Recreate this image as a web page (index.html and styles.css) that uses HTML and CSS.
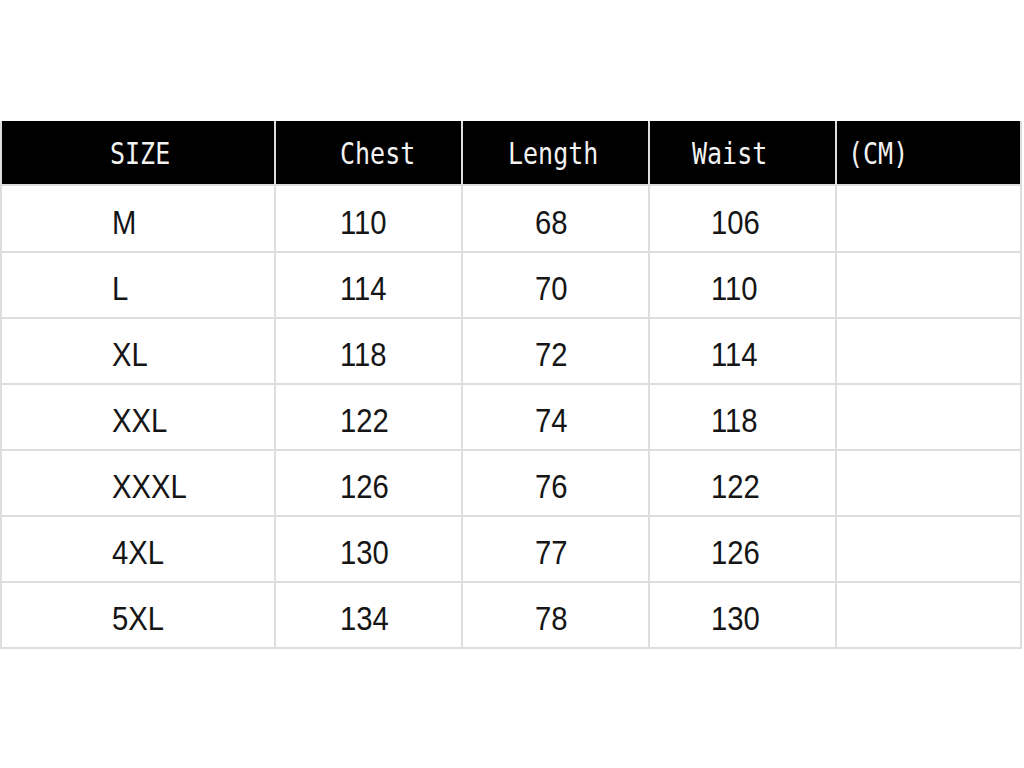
FILE: index.html
```html
<!DOCTYPE html>
<html>
<head>
<meta charset="utf-8">
<link rel="stylesheet" href="styles.css">
</head>
<body>
<div class="chart">
  <div class="hd c0"><span>SIZE</span></div>
  <div class="hd c1"><span>Chest</span></div>
  <div class="hd c2"><span>Length</span></div>
  <div class="hd c3"><span>Waist</span></div>
  <div class="hd c4"><span>(CM)</span></div>

  <div class="cell c0"><span>M</span></div><div class="cell c1"><span>110</span></div><div class="cell c2"><span>68</span></div><div class="cell c3"><span>106</span></div><div class="cell c4"></div>
  <div class="cell c0"><span>L</span></div><div class="cell c1"><span>114</span></div><div class="cell c2"><span>70</span></div><div class="cell c3"><span>110</span></div><div class="cell c4"></div>
  <div class="cell c0"><span>XL</span></div><div class="cell c1"><span>118</span></div><div class="cell c2"><span>72</span></div><div class="cell c3"><span>114</span></div><div class="cell c4"></div>
  <div class="cell c0"><span>XXL</span></div><div class="cell c1"><span>122</span></div><div class="cell c2"><span>74</span></div><div class="cell c3"><span>118</span></div><div class="cell c4"></div>
  <div class="cell c0"><span>XXXL</span></div><div class="cell c1"><span>126</span></div><div class="cell c2"><span>76</span></div><div class="cell c3"><span>122</span></div><div class="cell c4"></div>
  <div class="cell c0"><span>4XL</span></div><div class="cell c1"><span>130</span></div><div class="cell c2"><span>77</span></div><div class="cell c3"><span>126</span></div><div class="cell c4"></div>
  <div class="cell c0"><span>5XL</span></div><div class="cell c1"><span>134</span></div><div class="cell c2"><span>78</span></div><div class="cell c3"><span>130</span></div><div class="cell c4"></div>
</div>
</body>
</html>
```
FILE: styles.css
```css
html, body {
  margin: 0;
  padding: 0;
  background: #ffffff;
}

.chart {
  margin-top: 121px;
  width: 1022px;
  box-sizing: border-box;
  display: grid;
  grid-template-columns: 272px 185px 185px 185px 183px;
  grid-template-rows: 63px 65px repeat(6, 64px);
  gap: 2px;
  padding: 0 2px 2px 2px;
  background: #dedede;
}

.hd {
  background: #000000;
  color: #f2f2f2;
  font-family: "DejaVu Sans Mono", "Liberation Mono", monospace;
  font-size: 25px;
  display: flex;
  align-items: center;
  padding-top: 2px;
  box-sizing: border-box;
}

.hd span {
  display: inline-block;
  transform: scaleY(1.18);
}

.cell {
  background: #ffffff;
  color: #151515;
  font-family: "Liberation Sans", Arial, sans-serif;
  font-size: 34px;
  display: flex;
  align-items: center;
  padding-top: 7px;
  box-sizing: border-box;
}

.cell span {
  display: inline-block;
  transform: scaleX(0.86);
  transform-origin: left center;
}

.hd.c0 { padding-left: 108px; }
.hd.c1 { padding-left: 64px; }
.hd.c2 { padding-left: 45px; }
.hd.c3 { padding-left: 42px; }
.hd.c4 { padding-left: 11px; }

.cell.c0 { padding-left: 110px; }
.cell.c1 { padding-left: 64px; }
.cell.c2 { padding-left: 72px; }
.cell.c3 { padding-left: 61px; }
```
